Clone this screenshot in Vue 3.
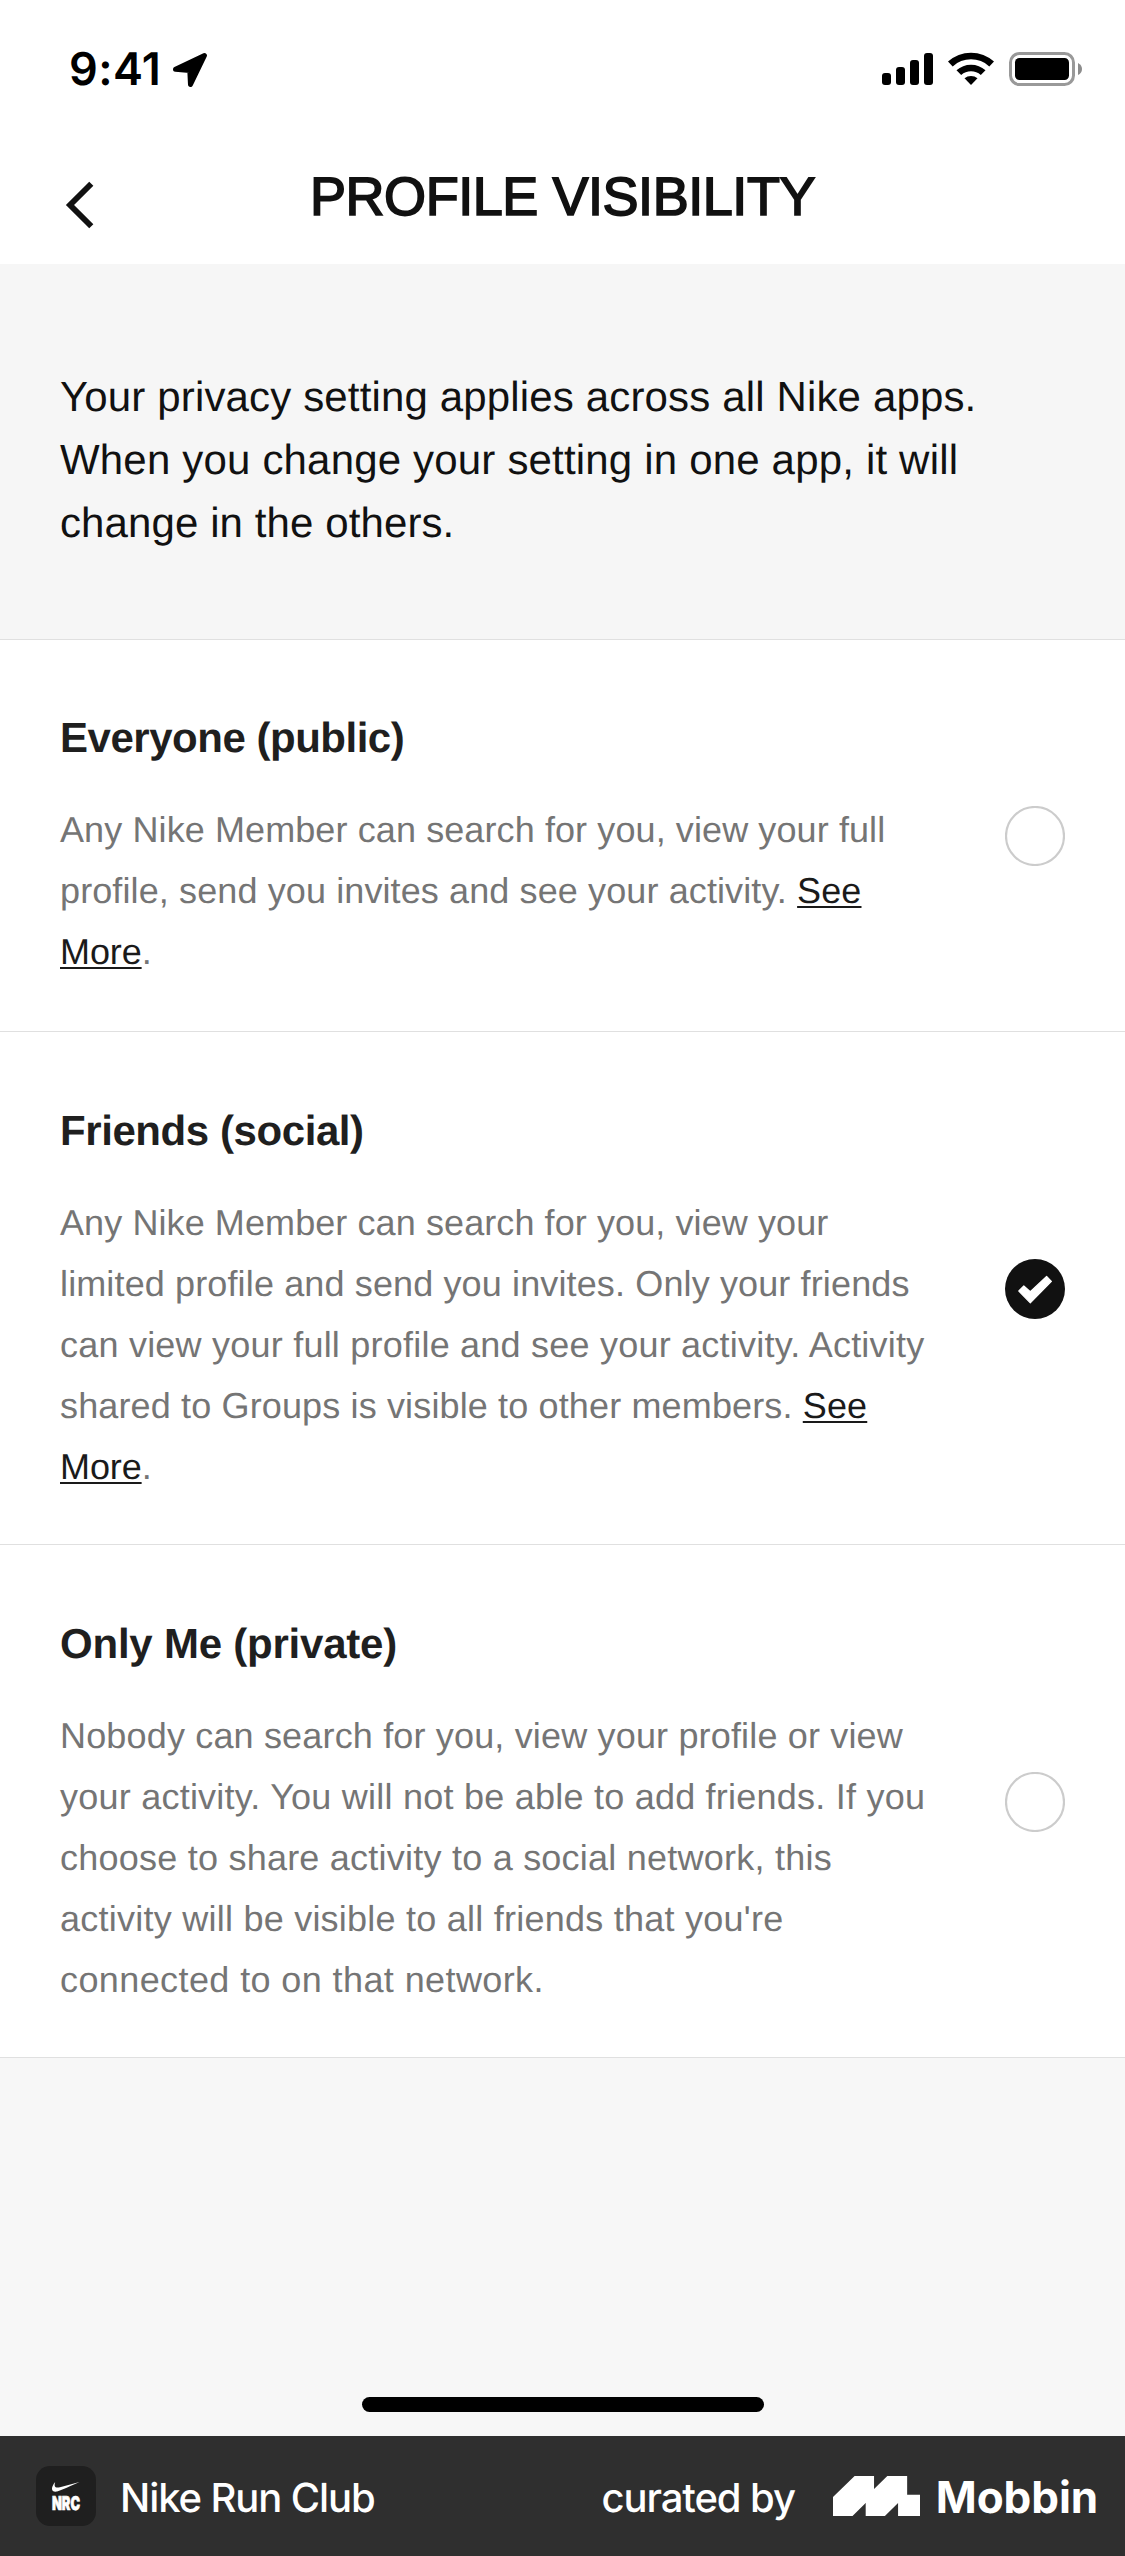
<script setup>
import { ref } from 'vue'

const selected = ref('friends')

const intro = [
  { track: 0.15, t: 'Your privacy setting applies across all Nike apps.' },
  { track: 0.18, t: 'When you change your setting in one app, it will' },
  { track: 0.1, t: 'change in the others.' },
]

const options = [
  {
    id: 'everyone',
    title: 'Everyone (public)',
    track: -0.48,
    lines: [
      { track: 0.1, parts: [{ t: 'Any Nike Member can search for you, view your full' }] },
      { track: 0.11, parts: [{ t: 'profile, send you invites and see your activity. ' }, { t: 'See', link: true }] },
      { track: -0.1, parts: [{ t: 'More', link: true }, { t: '.' }] },
    ],
  },
  {
    id: 'friends',
    title: 'Friends (social)',
    track: -0.42,
    lines: [
      { track: 0.09, parts: [{ t: 'Any Nike Member can search for you, view your' }] },
      { track: 0.13, parts: [{ t: 'limited profile and send you invites. Only your friends' }] },
      { track: 0.22, parts: [{ t: 'can view your full profile and see your activity. Activity' }] },
      { track: 0.14, parts: [{ t: 'shared to Groups is visible to other members. ' }, { t: 'See', link: true }] },
      { track: -0.1, parts: [{ t: 'More', link: true }, { t: '.' }] },
    ],
  },
  {
    id: 'private',
    title: 'Only Me (private)',
    track: -0.22,
    lines: [
      { track: 0.165, parts: [{ t: 'Nobody can search for you, view your profile or view' }] },
      { track: 0.23, parts: [{ t: 'your activity. You will not be able to add friends. If you' }] },
      { track: 0.23, parts: [{ t: 'choose to share activity to a social network, this' }] },
      { track: 0.24, parts: [{ t: "activity will be visible to all friends that you're" }] },
      { track: 0.4, parts: [{ t: 'connected to on that network.' }] },
    ],
  },
]

const tracking = (v) => ({ letterSpacing: v + 'px' })
</script>

<template>
  <div class="screen">
    <div class="status">
      <span class="time">9:41</span>
      <svg class="locate" width="36" height="36" viewBox="0 0 36 36">
        <path d="M32.5 3.5 L18.5 32.5 L17.8 18.6 L3.5 17.2 Z" fill="#000" stroke="#000" stroke-width="5" stroke-linejoin="round" />
      </svg>
      <svg class="system" width="204" height="36" viewBox="0 0 204 36">
        <rect x="2" y="21" width="9" height="12" rx="3" />
        <rect x="16" y="15" width="9" height="18" rx="3" />
        <rect x="30" y="8" width="9" height="25" rx="3" />
        <rect x="44" y="1" width="9" height="32" rx="3" />
        <path d="M68 9.6 A34 34 0 0 1 114 9.6 L109.3 14.4 A27 27 0 0 0 72.7 14.4 Z" />
        <path d="M76.5 18.3 A21.5 21.5 0 0 1 105.5 18.3 L100.8 23 A14.8 14.8 0 0 0 81.2 23 Z" />
        <path d="M84.5 26.3 A10 10 0 0 1 97.5 26.3 L91 33 Z" />
        <rect x="130.5" y="1.5" width="63" height="31" rx="9" fill="none" stroke="#999" stroke-width="3" />
        <rect x="135" y="6" width="54" height="22" rx="4.5" />
        <path d="M198 11 Q202 13 202 17 Q202 21 198 23 Z" fill="#8c8c8c" />
      </svg>
    </div>

    <header class="nav">
      <svg class="back" width="30" height="48" viewBox="0 0 30 48">
        <path d="M27.3 2.7 L6 24 L27.3 45.3" fill="none" stroke="#111" stroke-width="5.8" />
      </svg>
      <h1 class="heading">PROFILE VISIBILITY</h1>
    </header>

    <section class="intro">
      <p v-for="line in intro" :key="line.t" :style="tracking(line.track)">{{ line.t }}</p>
    </section>

    <section v-for="o in options" :key="o.id" class="option" :class="o.id" @click="selected = o.id">
      <div class="copy">
        <h2 :style="tracking(o.track)">{{ o.title }}</h2>
        <p v-for="(line, i) in o.lines" :key="i" :style="tracking(line.track)"><template v-for="(part, j) in line.parts" :key="j"><a v-if="part.link">{{ part.t }}</a><span v-else>{{ part.t }}</span></template></p>
      </div>
      <svg class="radio" width="60" height="60" viewBox="0 0 60 60">
        <template v-if="selected === o.id">
          <circle cx="30" cy="30" r="30" fill="#111" />
          <path d="M13.8 32 L18.8 27 L25.3 32.8 L41.6 17.5 L46.4 22.3 L25.3 43.8 Z" fill="#fff" stroke="#fff" stroke-width="1.2" stroke-linejoin="round" />
        </template>
        <circle v-else cx="30" cy="30" r="29" fill="#fff" stroke="#ccc" stroke-width="2.2" />
      </svg>
    </section>

    <div class="rest"><div class="indicator"></div></div>

    <footer class="bar">
      <svg class="app" width="60" height="60" viewBox="0 0 60 60">
        <rect width="60" height="60" rx="14" fill="#1f1f1f" />
        <path d="M19.2 16 C14.6 21.5 14.8 26.5 21 25.6 Q23 25.2 43.5 16 L24 21.2 C19 22.4 17.8 20.5 19.2 16 Z" fill="#fff" />
        <text x="16" y="43.8" textLength="28" lengthAdjust="spacingAndGlyphs" class="nrc">NRC</text>
      </svg>
      <span class="name">Nike Run Club</span>
      <span class="by">curated by</span>
      <svg class="mark" width="87" height="40" viewBox="0 0 83.3 40" preserveAspectRatio="none">
        <path d="M0 21 L20.7 0 H39.3 V13 L52 0 H71 V18.7 H83.3 V40 H62.3 V27 L49.7 40 H31.3 V27 L18.7 40 H0 Z" fill="#fff" />
      </svg>
      <span class="brand">Mobbin</span>
    </footer>
  </div>
</template>

<style>
body {
  margin: 0;
}
</style>

<style scoped>
.screen {
  width: 1125px;
  height: 2556px;
  display: flex;
  flex-direction: column;
  background: #fff;
  font-family: "Liberation Sans", Arial, sans-serif;
  color: #111;
  overflow: hidden;
  text-rendering: geometricPrecision;
}
h1, h2, p {
  margin: 0;
  font-weight: 400;
  white-space: pre;
}
.status {
  height: 140px;
  flex: none;
  display: flex;
  align-items: flex-start;
  box-sizing: border-box;
  padding: 52px 41px 0 69px;
  color: #000;
}
.time {
  width: 103px;
  font: 600 45px/34px Inter, sans-serif;
  letter-spacing: 0.4px;
}
.system {
  margin-left: auto;
}
.nav {
  height: 124px;
  flex: none;
  display: grid;
  grid-template-columns: 60px 1fr 60px;
  box-sizing: border-box;
  padding: 26px 64px 0;
}
.back {
  margin-top: 15px;
}
.heading {
  text-align: center;
  font-size: 54px;
  line-height: 62px;
  letter-spacing: -0.45px;
  -webkit-text-stroke: 1.7px #111;
}
.intro {
  height: 376px;
  flex: none;
  box-sizing: border-box;
  padding: 101px 60px 0;
  background: #f6f6f6;
  border-bottom: 1px solid #e0e0e0;
  font-size: 42px;
  line-height: 63px;
}
.option {
  flex: none;
  display: flex;
  align-items: center;
  justify-content: space-between;
  padding: 0 60px;
  border-bottom: 1px solid #e0e0e0;
}
.copy {
  padding: 67px 0 47px;
}
.everyone .copy {
  padding: 66px 0 49px;
}
.option h2 {
  margin-bottom: 30px;
  font-size: 42px;
  font-weight: 700;
  line-height: 63px;
  color: #1f1f1f;
}
.option p {
  font-size: 36px;
  line-height: 61px;
  color: #757575;
}
.option a {
  color: #1a1a1a;
  text-decoration: underline;
  text-decoration-thickness: 2px;
  text-underline-offset: 3px;
  text-decoration-skip-ink: none;
}
.radio {
  flex: none;
  margin-top: 2px;
}
.everyone .radio {
  margin-top: 0;
}
.rest {
  flex: 1;
  display: flex;
  align-items: flex-end;
  justify-content: center;
  padding-bottom: 24px;
  background: #f7f7f7;
}
.indicator {
  width: 402px;
  height: 15px;
  border-radius: 8px;
  background: #000;
}
.bar {
  height: 120px;
  flex: none;
  display: flex;
  align-items: center;
  box-sizing: border-box;
  padding: 0 27px 0 36px;
  background: #2f2f2f;
  color: #fff;
  font: 500 40px/48px Inter, sans-serif;
}
.nrc {
  font: 900 19px Inter, sans-serif;
  fill: #fff;
  stroke: #fff;
  stroke-width: 0.7px;
}
.name {
  margin-left: 24px;
  padding-top: 3px;
  letter-spacing: -1.1px;
}
.by {
  margin-left: auto;
  padding-top: 3px;
  letter-spacing: -1.1px;
}
.mark {
  margin: 0 16px 0 38px;
}
.brand {
  padding-top: 2px;
  font-weight: 700;
  font-size: 44px;
  letter-spacing: -0.1px;
}
</style>
